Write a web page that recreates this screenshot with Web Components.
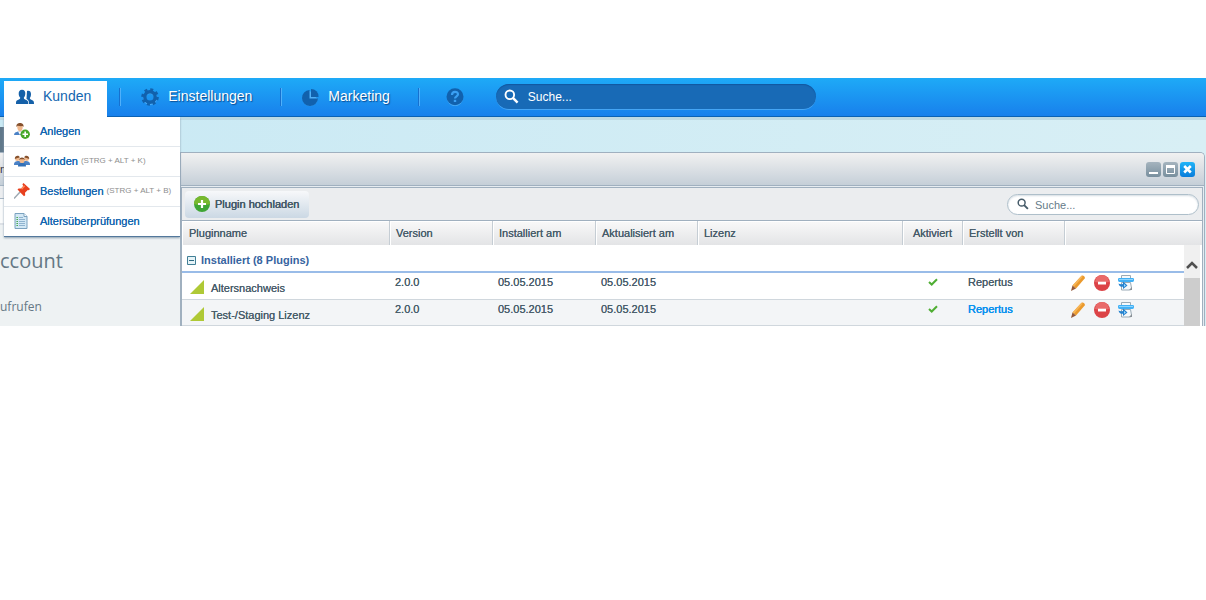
<!DOCTYPE html>
<html lang="de">
<head>
<meta charset="utf-8">
<title>Plugin Manager</title>
<style>
body { margin: 0; padding-top: 78px; background: #fff; font-family: "Liberation Sans", Arial, sans-serif; font-size: 11px; color: #475c6a; }
</style>
</head>
<body>
<shop-backend></shop-backend>
<script>
const ICONS = {
  users: ['0 0 18 16', '<g fill="#1460a8"><path d="M11 2c2-1 4 0 4 3 0 2-.5 3-1.200 4 .2 1.500 1.700 1.500 3 2.500 1 .8 1.200 1.500 1.200 3.500h-5c0-3-.5-4-2.500-5z"/><path d="M6 .8c2.500 0 3.500 1.700 3.300 4-.1 2-.8 3.200-1.500 4 .1 1.600 1.400 1.600 3 2.500 1.500.8 1.500 2 1.500 3.700H0c0-2 0-3 1.300-3.700 1.500-.8 2.800-.8 3-2.500C3.300 7.800 2.700 6.700 2.700 4.800 2.600 2.500 3.700.8 6 .8z"/></g>'],
  gear: ['0 0 18 18', '<g fill="none" stroke="#4fb0f8"><circle cx="9" cy="10" r="5.500" stroke-width="3"/></g><g fill="none" stroke="#1161ad"><circle cx="9" cy="9" r="5.200" stroke-width="3.400"/><circle cx="9" cy="9" r="7.500" stroke-width="2.600" stroke-dasharray="3 2.890"/></g>'],
  pie: ['0 0 17 17', '<path fill="#4fb0f8" d="M8 2a7.500 7.500 0 1 0 7.500 8z"/><path fill="#1161ad" d="M7.500 1v8.500H16A8 8 0 1 1 7.500 1z"/><path fill="#1161ad" d="M9 0a7.500 7.500 0 0 1 7.500 8H9z"/>'],
  help: ['0 0 18 18', '<circle cx="9" cy="10" r="8" fill="#4fb0f8"/><circle cx="9" cy="8.700" r="8.500" fill="#1161ad"/><path fill="none" stroke="#3aa0f4" stroke-width="2.200" d="M6 7c0-4 6-4 6-.7 0 2-3 2-3 4.200"/><path fill="#3aa0f4" d="M7.800 11.800h2.400V14H7.800z"/>'],
  lens: ['0 0 16 16', '<circle cx="6.200" cy="6.200" r="4.600" fill="none" stroke="currentColor" stroke-width="2"/><path d="M9.500 9.500l5 5" stroke="currentColor" stroke-width="2.600"/>'],
  addUser: ['0 0 16 16', '<path fill="#4b82c6" d="M0 12c0-2.500 2-3 4-3.500h4c2 .5 4 1 4 3.500z"/><path fill="#fff" d="M4 8.500h4L6 12z"/><path fill="#f0b98e" d="M3.200 3c0-2 5.600-2 5.600 0 0 3-1 5.500-2.800 5.500S3.200 6 3.200 3z"/><path fill="#86512d" d="M2.500 4C2 1 4 0 6 0s4 1 3.500 4L8.600 3C6 3.500 4 2.500 3.300 3z"/><circle cx="11.200" cy="11.200" r="4.700" fill="#48a829"/><path stroke="#fff" stroke-width="1.600" d="M8.500 11.200H14M11.200 8.500V14"/>'],
  group: ['0 0 16 12', '<path fill="#4b82c6" d="M0 9c0-2 2-3 4-3h8c2 0 4 1 4 3v1H0z"/><path fill="#3270b7" d="M4 11.500C4 8.500 5.500 8 8 8s4 .5 4 3.500z"/><g fill="#f0b98e"><circle cx="3.300" cy="3.800" r="2.300"/><circle cx="12.700" cy="3.800" r="2.300"/><circle cx="8" cy="5.500" r="2.600"/></g><path fill="#86512d" d="M.8 4C.6 0 5.500 0 5.800 2.500L3.500 3zM15.200 4c.2-4-4.700-4-5 -1.500l2.300.5zM5.200 5.500C4.500 1.500 11.500 1.500 10.800 5.500L10 4.200 6 4.200z"/>'],
  pin: ['0 0 16 16', '<path d="M0 15.500L6.500 8.500" stroke="#9da8b1" stroke-width="1.500"/><path fill="#e8401e" d="M9.500 0L16 6l-1.200 1.200-1-.3-2.800 2.800.2 2.500-1.200 1L3.500 6.500 4.600 5.400l2.500.2L9.200 3l-.8-1.700z"/><path fill="#ff8a5c" d="M10 2.200l1.200 1-3 3.200-1.300-.6z"/>'],
  doc: ['0 0 14 16', '<path fill="#d3e8f5" stroke="#7ba2bf" d="M1 .5h9L13 3.500v12H1z"/><path fill="#fff" stroke="#7ba2bf" d="M10 .5v3h3"/><path stroke="#8fb3cf" d="M5 4.500h4M5 6.500h6M5 8.500h6M5 10.500h6M5 12.500h6"/><path stroke="#47a84b" stroke-width="1.500" stroke-dasharray="1 1" d="M3.200 4v9"/>'],
  plus: ['0 0 16 16', '<circle cx="8" cy="8" r="8" fill="#3fa535"/><path fill="#77b82e" d="M0 8a8 8 0 0 1 16 0c-4 1.500-11 1.500-16 0z"/><path stroke="#fff" stroke-width="2.200" d="M4 8h8M8 4v8"/>'],
  minus: ['0 0 16 16', '<circle cx="8" cy="8" r="8" fill="#dc4347"/><path fill="#e96a6a" d="M1 7a7 7 0 0 1 14 0c-4 1-10 1-14 0z"/><path fill="#fff" d="M4 6.700h8v2.800H4z"/>'],
  pencil: ['0 0 16 16', '<path fill="#eb9a2d" d="M11.500.8c1.500-1.200 4.200 1 3.200 2.700L6 13.500 2.500 10.500z"/><path fill="#f6b558" d="M11.500.8l1.200 1L4 11.800l-1.500-1.300z"/><path fill="#93583a" d="M2.500 10.500L6 13.500 1 16z"/>'],
  update: ['0 0 16 16', '<path fill="#f6f9fb" stroke="#9aaab5" d="M3.500.5h9v4h-9zM3.500 7.500h9l1 5.500c0 1.500-1 2-2 2h-8z"/><path fill="#41b0f5" d="M1 3h14c1 0 1 1 1 2s-.5 2-1.500 2h-13C.5 7 0 6 0 5s0-2 1-2z"/><path fill="#8dd5ff" d="M1 4h14v1H1z"/><path fill="#2582cf" d="M5 6.500l4.500 4L5 14v-2.200C2.500 12 1 11 .5 8.500 2 9.500 3.500 9.300 5 9z"/><path fill="#9fdcff" d="M6 9l1.800 1.500L6 12z"/><path fill="#8a9197" d="M11 15l3-3v3z"/>'],
  check: ['0 0 10 8', '<path fill="none" stroke="#4fae33" stroke-width="2" d="M1 4l2.700 2.500L9 1.200"/>'],
  triangle: ['0 0 14 14', '<path fill="#afc936" d="M14 0v14H0z"/>'],
  fold: ['0 0 9 9', '<path fill="#e6f3f7" stroke="#417f96" d="M.5.5h8v8h-8z"/><path stroke="#2d6980" d="M2 4.500h5"/>'],
  min: ['0 0 15 15', '<path fill="#fff" d="M3 10h9v2H3z"/>'],
  max: ['0 0 15 15', '<path fill="none" stroke="#fff" stroke-width="1" d="M3.500 4v7.500h8V4"/><path fill="#fff" d="M3 3h9v3H3z"/>'],
  close: ['0 0 15 15', '<path stroke="#fff" stroke-width="2.600" d="M4.200 4l6.600 6.500M10.800 4L4.200 10.500"/>'],
  up: ['0 0 12 8', '<path fill="none" stroke="#505050" stroke-width="2.500" d="M1 7l5-5 5 5"/>']
};

function define(name, html, setup) {
  const template = document.createElement('template');
  template.innerHTML = '<style>*{box-sizing:border-box}</style>' + html;
  customElements.define(name, class extends HTMLElement {
    constructor() {
      super();
      this.attachShadow({ mode: 'open' }).append(template.content.cloneNode(true));
    }
    connectedCallback() {
      if (setup && !this.ready) { this.ready = true; setup(this, this.shadowRoot); }
    }
  });
}

function addIcon(holder, name, size) {
  const icon = document.createElement('ui-icon');
  icon.setAttribute('name', name);
  if (size) icon.setAttribute('size', size);
  holder.prepend(icon);
}

define('ui-icon', `<style>:host{display:inline-block;flex:none}svg{display:block}</style>`, (el, root) => {
  const [box, shapes] = ICONS[el.getAttribute('name')];
  const [, , w, h] = box.split(' ');
  const svg = document.createElementNS('http://www.w3.org/2000/svg', 'svg');
  svg.setAttribute('viewBox', box);
  svg.setAttribute('width', el.getAttribute('size') || w);
  svg.setAttribute('height', el.getAttribute('size') || h);
  svg.setAttribute('aria-hidden', 'true');
  svg.innerHTML = shapes;
  root.append(svg);
});

define('nav-item', `<style>
:host{display:flex;height:36px}
button{display:flex;align-items:center;gap:9px;border:0;padding:0 12px 6px;margin:0;background:none;font:14px "Liberation Sans",Arial,sans-serif;color:#fff;text-shadow:1px 1px 1px #0c4d92;white-space:nowrap}
ui-icon{margin-top:2px}
:host([active]) button{background:#fff;color:#1366b0;text-shadow:none;padding-right:16px}
</style><button type="button"><slot></slot></button>`, (el, root) => {
  const button = root.querySelector('button');
  addIcon(button, el.getAttribute('icon'));
  if (el.title) button.setAttribute('aria-label', el.title);
});

define('nav-divider', `<style>:host{display:block;width:2px;height:18px;margin-top:7px;border-left:1px solid #1670cf;border-right:1px solid #50b0fa}</style>`);

define('search-box', `<style>
:host{display:flex}
label{display:flex;flex:1;align-items:center;min-width:0;height:21px;padding:0 9px;gap:6px;border:1px solid #aebfca;border-radius:11px;background:#fff;box-shadow:inset 0 1px 2px #d5dde3;color:#475c6a}
input{flex:1;min-width:0;border:0;padding:1px 0 0;outline:0;background:none;font:11px "Liberation Sans",Arial,sans-serif;color:inherit}
input::placeholder{color:#657b89;opacity:1}
:host([dark]) label{gap:9px;padding:0 8px;height:26px;border:0;border-bottom:1px solid #45a5f5;border-radius:13px;background:#186ab6;box-shadow:inset 0 1px 1px #1158a0;color:#fff}
:host([dark]) input{font-size:12px}
:host([dark]) input::placeholder{color:#fff}
</style><label><input type="text" placeholder="Suche..." aria-label="Suche"></label>`, (el, root) => {
  addIcon(root.querySelector('label'), 'lens', el.hasAttribute('dark') ? 15 : 12);
});

define('menu-entry', `<style>
:host{display:block;border-bottom:1px solid #e3e8ed}
:host(:last-of-type){border:0}
a{display:flex;align-items:center;height:29px;padding-bottom:2px;color:#1366b0;text-shadow:0 0 0 #1366b0;text-decoration:none;white-space:nowrap}
span{width:36px;display:flex;padding-left:10px}
</style><a href="#"><span><slot name="icon"></slot></span><slot></slot></a>`);

define('drop-menu', `<style>
:host{display:block;background:#fff;border-bottom:1px solid #53789c;box-shadow:0 1px 2px #8ca0b0}
::slotted(*){display:block}
</style><slot></slot>`);

define('top-bar', `<style>
:host{display:block;background:linear-gradient(#1eaaf7,#1880ec);border-bottom:1px solid #0b62b4}
nav{display:flex;align-items:flex-start;height:38px;padding:3px 4px 0}
nav-divider{margin-left:12px}
nav-divider + nav-item{margin-left:8px}
.wide{margin-left:16px}
nav-divider + .help{margin-left:14px}
search-box{width:320px;margin:3px 0 0 20px}
</style><nav>
<nav-item active icon="users">Kunden</nav-item><nav-divider></nav-divider>
<nav-item icon="gear">Einstellungen</nav-item><nav-divider class="wide"></nav-divider>
<nav-item icon="pie">Marketing</nav-item><nav-divider class="wide"></nav-divider>
<nav-item class="help" icon="help" title="Hilfe"></nav-item>
<search-box dark></search-box></nav>`);

define('start-panel', `<style>
:host{display:block;overflow:hidden;background:#eef2f3;color:#657885;font-family:"Open Sans",sans-serif}
.title{height:33px;border-top:1px solid #a5b4c2;background:linear-gradient(#f0f0f0,#c5cfd8);font:11px/32px "Liberation Sans",Arial,sans-serif;color:#334}
.tool{height:14px;border-top:1px solid #a5b4c2;border-bottom:1px solid #a5b4c2;background:#ebedef}
.line{height:26px;background:#fafbfb;border-bottom:2px solid #dde1e6}
h2{margin:23px 0 0;font-size:20px;line-height:26px;font-weight:400}
p{margin:24px 0 0;font-size:12px;line-height:18px}
</style><div class="title">m</div><div class="tool"></div><div class="line"></div><h2>ccount</h2><p>ufrufen</p>`);

define('window-buttons', `<style>
:host{display:flex;gap:2px}
button{width:15px;height:15px;padding:0;border:0;border-radius:3px;background:linear-gradient(#a5b4be,#788f9e)}
button.close{background:linear-gradient(#20b4f8,#087cda)}
</style><button type="button" aria-label="Minimieren"><ui-icon name="min"></ui-icon></button><button type="button" aria-label="Maximieren"><ui-icon name="max"></ui-icon></button><button class="close" type="button" aria-label="Schließen"><ui-icon name="close"></ui-icon></button>`);

define('plugin-table', `<style>
:host{display:block;position:relative;background:#fff}
table{width:100%;table-layout:fixed;border-collapse:separate;border-spacing:0;font-size:11px;color:#475c6a;text-shadow:0 0 0 #475c6a}
th{height:24px;padding:0 6px;text-align:left;font-weight:400;background:linear-gradient(#f9f9f9,#e3e4e6);border-right:1px solid #c5cdd4;box-shadow:inset 1px 1px #fff;white-space:nowrap}
th:first-child{padding-left:7px}
th:last-child{border:0}
td{height:27px;padding:3px 5px 0;vertical-align:top;border-bottom:1px solid #d0d7dd;line-height:13px}
td:first-child{padding:7px 8px 0}
td:last-child{padding:2px 5px 0}
tr:last-child td{height:26px}
.mid{text-align:center}
.name{display:flex;gap:7px;align-items:flex-start;line-height:14px}
.name span{margin-top:1px}
.group td,.group td:first-child{height:28px;padding:4px 5px 0;border-bottom:2px solid #99bce8;vertical-align:middle;color:#3764a0;font-weight:bold;text-shadow:none}
.group td > div{display:flex;gap:5px;align-items:center}
.odd td{background:#f3f5f7}
a{color:#0c93ef;text-shadow:0 0 0 #0c93ef,0 0 0 #0c93ef;text-decoration:none}
.actions{display:flex;gap:8px}
.actions button{padding:0;border:0;background:none;display:flex}
.scroll{position:absolute;top:24px;right:0;bottom:0;width:18px;background:#fff}
.scroll div{width:16px;height:100%;background:linear-gradient(#f0f0f0 33px,#cdcdcd 33px)}
.scroll ui-icon{padding:16px 2px}
</style><table>
<colgroup><col style="width:208px"><col style="width:103px"><col style="width:103px"><col style="width:102px"><col><col style="width:60px"><col style="width:102px"><col style="width:137px"></colgroup>
<thead><tr><th>Pluginname</th><th>Version</th><th>Installiert am</th><th>Aktualisiert am</th><th>Lizenz</th><th class="mid">Aktiviert</th><th>Erstellt von</th><th></th></tr></thead>
<tbody><tr class="group"><td colspan="8"><div><ui-icon name="fold"></ui-icon>Installiert (8 Plugins)</div></td></tr></tbody></table>
<div class="scroll"><div><ui-icon name="up"></ui-icon></div></div>`, (el, root) => {
  const plugins = [['Altersnachweis', 'Repertus'], ['Test-/Staging Lizenz', '<a href="#">Repertus</a>']];
  root.querySelector('tbody').insertAdjacentHTML('beforeend', plugins.map(([name, author], i) => `
<tr class="${i % 2 ? 'odd' : ''}"><td><div class="name"><ui-icon name="triangle"></ui-icon><span>${name}</span></div></td><td>2.0.0</td><td>05.05.2015</td><td>05.05.2015</td><td></td><td class="mid"><ui-icon name="check"></ui-icon></td><td>${author}</td><td><div class="actions"><button type="button" aria-label="Bearbeiten"><ui-icon name="pencil"></ui-icon></button><button type="button" aria-label="Löschen"><ui-icon name="minus"></ui-icon></button><button type="button" aria-label="Aktualisieren"><ui-icon name="update"></ui-icon></button></div></td></tr>`).join(''));
});

define('plugin-window', `<style>
:host{display:block;border:1px solid #a0b0bf;border-bottom:0;border-radius:0 5px 0 0;background:#e6ecf1;overflow:hidden}
header{display:flex;align-items:center;justify-content:flex-end;height:33px;padding-right:9px;background:linear-gradient(#f1f1f1,#c5cfd8);border-bottom:1px solid #a0b0bf}
section{margin:1px 1px 0 0;border:1px solid #a0b0bf;border-bottom:0}
.tools{display:flex;align-items:center;justify-content:space-between;height:33px;padding:0 3px;background:#ebedef;border-bottom:1px solid #a0b0bf}
.upload{display:flex;align-items:center;gap:5px;height:27px;padding:0 10px 0 9px;border:0;border-radius:4px;background:linear-gradient(#f7f8fa,#cbd8e4);font:11px "Liberation Sans",Arial,sans-serif;color:#475c6a;text-shadow:0 0 0 #475c6a,0 0 0 #475c6a}
search-box{width:192px}
</style><header><window-buttons></window-buttons></header><section><div class="tools"><button class="upload" type="button"><ui-icon name="plus"></ui-icon>Plugin hochladen</button><search-box></search-box></div><plugin-table></plugin-table></section>`);

define('shop-backend', `<style>
:host{display:block}
main{position:relative;display:grid;grid-template-columns:180px minmax(0,1fr);padding:35px 1px 0 0;background:linear-gradient(#bdd9e4 3px,transparent 3px),linear-gradient(90deg,#c9e9f4,#d8eff5);overflow:hidden}
.stub{position:absolute;top:10px;left:0;width:5px;height:25px;background:#60788a}
drop-menu{position:absolute;top:0;left:4px;width:176px}
small{font-size:8px;color:#8e8e8e;margin-left:3px;text-shadow:none}
</style><top-bar></top-bar><main><div class="stub"></div><start-panel></start-panel><plugin-window></plugin-window>
<drop-menu>
<menu-entry><ui-icon slot="icon" name="addUser"></ui-icon>Anlegen</menu-entry>
<menu-entry><ui-icon slot="icon" name="group"></ui-icon>Kunden<small>(STRG + ALT + K)</small></menu-entry>
<menu-entry><ui-icon slot="icon" name="pin"></ui-icon>Bestellungen<small>(STRG + ALT + B)</small></menu-entry>
<menu-entry><ui-icon slot="icon" name="doc"></ui-icon>Altersüberprüfungen</menu-entry>
</drop-menu></main>`);
</script>
</body>
</html>
